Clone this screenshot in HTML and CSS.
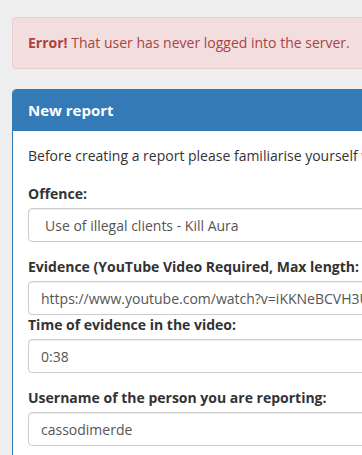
FILE: index.html
```html
<!DOCTYPE html>
<html lang="en">
<head>
  <meta charset="UTF-8" />
  <meta name="viewport" content="width=device-width, initial-scale=1.0"/>
  <title>New report</title>
  <link rel="stylesheet" href="styles.css">
</head>
<body>
  <div class="container">
    <div class="alert">
      <strong>Error!</strong> That user has never logged into the server.
    </div>
    <div class="panel">
      <div class="panel-heading">New report</div>
      <div class="panel-body">
        <p class="intro">Before creating a report please familiarise yourself with the rules of the server.</p>
        <div class="form-group">
          <label for="offence">Offence:</label>
          <select id="offence" class="form-control">
            <option>Use of illegal clients - Kill Aura</option>
          </select>
        </div>
        <div class="form-group tight">
          <label for="evidence">Evidence (YouTube Video Required, Max length: 5 minutes):</label>
          <input id="evidence" class="form-control" type="text" value="https://www.youtube.com/watch?v=iKKNeBCVH3U"/>
        </div>
        <div class="form-group">
          <label for="time">Time of evidence in the video:</label>
          <input id="time" class="form-control" type="text" value="0:38"/>
        </div>
        <div class="form-group">
          <label for="username">Username of the person you are reporting:</label>
          <input id="username" class="form-control" type="text" value="cassodimerde"/>
        </div>
      </div>
    </div>
  </div>
</body>
</html>
```

FILE: styles.css
```css
html, body {
  overflow: hidden;
}
body {
  margin: 0;
  background: #eeeeee;
  font-family: "Open Sans", "Liberation Sans", sans-serif;
  font-size: 14px;
  line-height: 20px;
  color: #333;
}
.container {
  width: 760px;
  padding: 17px 0 0 12px;
}
.alert {
  background: #f2dede;
  border: 1px solid #ebccd1;
  color: #a94442;
  border-radius: 4px;
  padding: 15px;
  margin-bottom: 20px;
}
.alert strong {
  font-weight: 700;
}
.panel {
  background: #fff;
  border: 1px solid #337ab7;
  border-radius: 4px;
}
.panel-heading {
  background: #337ab7;
  color: #fff;
  font-weight: 700;
  font-size: 15px;
  padding: 10px 15px;
  border-bottom: 1px solid #337ab7;
  border-radius: 3px 3px 0 0;
}
.panel-body {
  padding: 15px;
}
.intro {
  margin: 0 0 18px;
  white-space: nowrap;
}
.form-group {
  margin-bottom: 15px;
}
.form-group.tight {
  margin-bottom: 0;
}
label {
  display: block;
  font-weight: 700;
  margin-bottom: 4px;
  white-space: nowrap;
}
.form-control {
  display: block;
  width: 100%;
  box-sizing: border-box;
  height: 34px;
  padding: 6px 12px;
  font-family: inherit;
  font-size: 14px;
  color: #555;
  background: #fff;
  border: 1px solid #ccc;
  border-radius: 4px;
  box-shadow: inset 0 1px 1px rgba(0,0,0,.075);
}
select.form-control {
  -webkit-appearance: none;
  appearance: none;
  padding-left: 16px;
}
```
